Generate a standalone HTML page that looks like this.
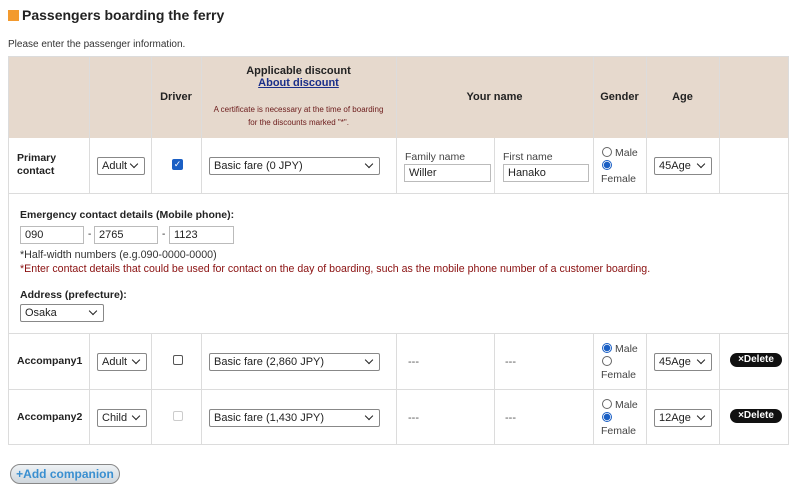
<!DOCTYPE html>
<html><head><meta charset="utf-8"><style>
*{box-sizing:border-box;margin:0;padding:0}
body{width:800px;height:493px;background:#fff;font-family:"Liberation Sans",Arial,sans-serif;color:#222;position:relative;overflow:hidden;font-size:11px}
.a{position:absolute}
.hd{background:#e6d9cd}
.vl{position:absolute;width:1px;background:#dcdcdc}
.hl{position:absolute;height:1px;background:#dcdcdc}
.b{font-weight:bold}
.sel{position:absolute;height:18px;border:1px solid #888;border-radius:2px;background:#fff;font-size:11px;padding:2px 4px;line-height:12px}
.sel:after{content:"";position:absolute;right:7px;top:3px;width:5px;height:5px;border-right:1.5px solid #222;border-bottom:1.5px solid #222;transform:rotate(45deg)}
.inp{position:absolute;height:18px;border:1px solid #bbb;background:#fff;font-size:11px;padding:2px 4px;line-height:12px}
.rad{position:absolute;width:10px;height:10px;border-radius:50%;border:1px solid #666;background:#fff}
.rad.on{border:1px solid #1a5fc4;background:radial-gradient(circle,#1a5fc4 3px,#fff 3.5px)}
.del{position:absolute;width:52px;height:14px;border-radius:7px;background:#111;color:#fff;font-size:10px;font-weight:bold;text-align:center;line-height:14px;padding-top:0}
.c{text-align:center}
.lb{font-size:10.5px}
</style></head><body>
<div class="a" style="left:8px;top:10px;width:11px;height:11px;background:#f39a2e"></div>
<div class="a b" style="left:22px;top:7px;font-size:14px;color:#222">Passengers boarding the ferry</div>
<div class="a" style="left:8px;top:39px;font-size:10px;color:#333">Please enter the passenger information.</div>

<div class="a hd" style="left:8px;top:56px;width:781px;height:82px"></div>
<div class="a" style="left:8px;top:56px;width:781px;height:389px;border:1px solid #dcdcdc"></div>
<div class="hl" style="left:8px;top:193px;width:781px"></div>
<div class="hl" style="left:8px;top:333px;width:781px"></div>
<div class="hl" style="left:8px;top:389px;width:781px"></div>
<div class="vl" style="left:89px;top:56px;height:137px"></div>
<div class="vl" style="left:151px;top:56px;height:137px"></div>
<div class="vl" style="left:201px;top:56px;height:137px"></div>
<div class="vl" style="left:396px;top:56px;height:137px"></div>
<div class="vl" style="left:593px;top:56px;height:137px"></div>
<div class="vl" style="left:646px;top:56px;height:137px"></div>
<div class="vl" style="left:719px;top:56px;height:137px"></div>
<div class="vl" style="left:494px;top:138px;height:55px"></div>
<div class="vl" style="left:89px;top:333px;height:112px"></div>
<div class="vl" style="left:151px;top:333px;height:112px"></div>
<div class="vl" style="left:201px;top:333px;height:112px"></div>
<div class="vl" style="left:396px;top:333px;height:112px"></div>
<div class="vl" style="left:494px;top:333px;height:112px"></div>
<div class="vl" style="left:593px;top:333px;height:112px"></div>
<div class="vl" style="left:646px;top:333px;height:112px"></div>
<div class="vl" style="left:719px;top:333px;height:112px"></div>

<div class="a b c" style="left:151px;top:91px;width:50px;font-size:11px">Driver</div>
<div class="a b c" style="left:201px;top:65px;width:195px;font-size:11px">Applicable discount</div>
<div class="a b c" style="left:201px;top:77px;width:195px;font-size:11px;color:#1a2f8a;text-decoration:underline">About discount</div>
<div class="a c" style="left:201px;top:103px;width:195px;font-size:8px;line-height:13px;color:#6b1a1a">A certificate is necessary at the time of boarding<br>for the discounts marked "*".</div>
<div class="a b c" style="left:396px;top:91px;width:197px">Your name</div>
<div class="a b c" style="left:593px;top:91px;width:53px">Gender</div>
<div class="a b c" style="left:646px;top:91px;width:73px">Age</div>

<!-- row 1 -->
<div class="a b lb" style="left:17px;top:152px;line-height:13px">Primary<br>contact</div>
<div class="sel" style="left:97px;top:157px;width:48px">Adult</div>
<div class="a" style="left:172px;top:159px;width:11px;height:11px;background:#1a5fc4;border-radius:2px;color:#fff;font-size:9px;line-height:11px;text-align:center">✓</div>
<div class="sel" style="left:209px;top:157px;width:171px">Basic fare (0 JPY)</div>
<div class="a" style="left:405px;top:151px;font-size:10.5px;color:#444">Family name</div>
<div class="inp" style="left:404px;top:164px;width:87px">Willer</div>
<div class="a" style="left:503px;top:151px;font-size:10.5px;color:#444">First name</div>
<div class="inp" style="left:503px;top:164px;width:86px">Hanako</div>
<div class="rad" style="left:602px;top:147px"></div><div class="a" style="left:615px;top:147px;font-size:10.5px;color:#444">Male</div>
<div class="rad on" style="left:602px;top:160px"></div><div class="a" style="left:601px;top:173px;font-size:10.5px;color:#444">Female</div>
<div class="sel" style="left:654px;top:157px;width:58px">45Age</div>

<!-- emergency -->
<div class="a b lb" style="left:20px;top:209px">Emergency contact details (Mobile phone):</div>
<div class="inp" style="left:20px;top:226px;width:64px">090</div>
<div class="a" style="left:88px;top:229px;font-size:10px">-</div>
<div class="inp" style="left:94px;top:226px;width:64px">2765</div>
<div class="a" style="left:162px;top:229px;font-size:10px">-</div>
<div class="inp" style="left:169px;top:226px;width:65px">1123</div>
<div class="a" style="left:20px;top:249px;font-size:10.7px;color:#333">*Half-width numbers (e.g.090-0000-0000)</div>
<div class="a" style="left:20px;top:263px;font-size:10.6px;color:#8a1010">*Enter contact details that could be used for contact on the day of boarding, such as the mobile phone number of a customer boarding.</div>
<div class="a b lb" style="left:20px;top:289px">Address (prefecture):</div>
<div class="sel" style="left:20px;top:304px;width:84px">Osaka</div>

<!-- acc1 -->
<div class="a b lb" style="left:17px;top:355px">Accompany1</div>
<div class="sel" style="left:97px;top:353px;width:50px">Adult</div>
<div class="a" style="left:173px;top:355px;width:10px;height:10px;border:1px solid #555;border-radius:2px"></div>
<div class="sel" style="left:209px;top:353px;width:171px">Basic fare (2,860 JPY)</div>
<div class="a" style="left:408px;top:356px;color:#555">---</div>
<div class="a" style="left:505px;top:356px;color:#555">---</div>
<div class="rad on" style="left:602px;top:343px"></div><div class="a" style="left:615px;top:343px;font-size:10.5px;color:#444">Male</div>
<div class="rad" style="left:602px;top:356px"></div><div class="a" style="left:601px;top:369px;font-size:10.5px;color:#444">Female</div>
<div class="sel" style="left:654px;top:353px;width:58px">45Age</div>
<div class="del" style="left:730px;top:353px">×Delete</div>

<!-- acc2 -->
<div class="a b lb" style="left:17px;top:411px">Accompany2</div>
<div class="sel" style="left:97px;top:409px;width:50px">Child</div>
<div class="a" style="left:173px;top:411px;width:10px;height:10px;border:1px solid #ccc;border-radius:2px"></div>
<div class="sel" style="left:209px;top:409px;width:171px">Basic fare (1,430 JPY)</div>
<div class="a" style="left:408px;top:412px;color:#555">---</div>
<div class="a" style="left:505px;top:412px;color:#555">---</div>
<div class="rad" style="left:602px;top:399px"></div><div class="a" style="left:615px;top:399px;font-size:10.5px;color:#444">Male</div>
<div class="rad on" style="left:602px;top:412px"></div><div class="a" style="left:601px;top:425px;font-size:10.5px;color:#444">Female</div>
<div class="sel" style="left:654px;top:409px;width:58px">12Age</div>
<div class="del" style="left:730px;top:409px">×Delete</div>

<div class="a b" style="left:10px;top:464px;width:110px;height:20px;border:1px solid #888;border-radius:10px;background:linear-gradient(#eef2f5,#cfd6dc);color:#3a8fd0;font-size:12px;line-height:18px;text-align:center">+Add companion</div>
</body></html>
